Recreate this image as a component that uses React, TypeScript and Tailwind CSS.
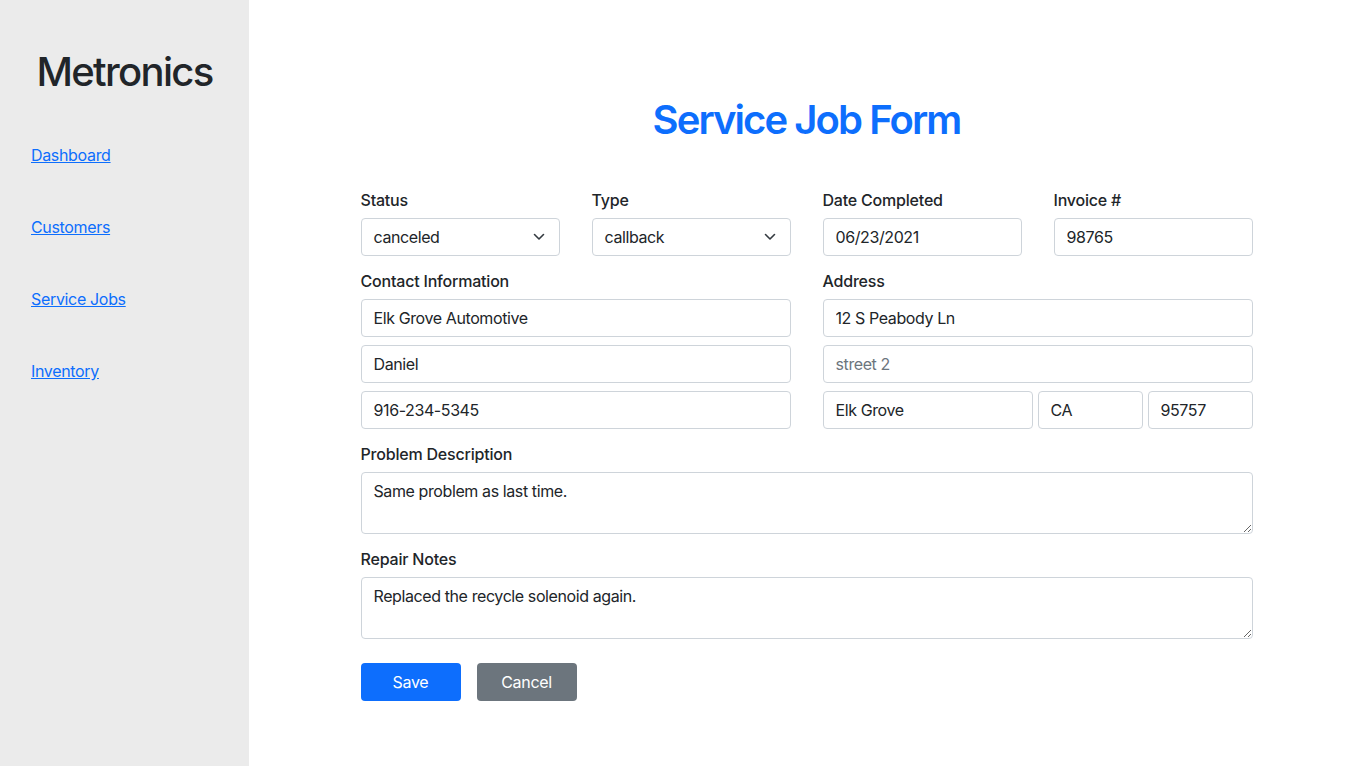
import React from "react";

const font = { fontFamily: "Inter, 'Liberation Sans', Arial, sans-serif" };

function Label({ children }: { children: React.ReactNode }) {
  return (
    <div className="mb-[6px] h-[26px] pt-[2px] text-[16px] leading-6 font-medium tracking-[-0.2px] text-[#212529]">
      {children}
    </div>
  );
}

function Field({ value, placeholder, className = "" }: { value?: string; placeholder?: string; className?: string }) {
  return (
    <input
      readOnly
      defaultValue={value}
      placeholder={placeholder}
      className={`block h-[38px] rounded-[4px] border border-[#ced4da] bg-white px-3 text-[16px] leading-6 tracking-[-0.4px] text-[#212529] placeholder:text-[#6c757d] outline-none ${className}`}
      style={font}
    />
  );
}

function Select({ value }: { value: string }) {
  return (
    <div className="flex h-[38px] w-full items-center justify-between rounded-[4px] border border-[#ced4da] bg-white pl-3 pr-[14px] text-[16px] leading-6 tracking-[-0.4px] text-[#212529]">
      <span>{value}</span>
      <svg width="12" height="8" viewBox="0 0 12 8" fill="none">
        <path d="M1.5 1.5L6 6l4.5-4.5" stroke="#343a40" strokeWidth="1.6" strokeLinecap="round" strokeLinejoin="round" />
      </svg>
    </div>
  );
}

function Area({ value }: { value: string }) {
  return (
    <textarea
      readOnly
      defaultValue={value}
      className="block h-[62px] w-full resize-y rounded-[4px] border border-[#ced4da] bg-white px-3 py-[6px] text-[16px] leading-6 tracking-[-0.4px] text-[#212529] outline-none"
      style={font}
    />
  );
}

export default function App() {
  return (
    <div className="flex min-h-[766px] w-full bg-white" style={font}>
      <aside className="w-[249px] shrink-0 bg-[#ebebeb]">
        <div className="pt-[48px] text-center text-[40px] leading-[48px] font-medium tracking-[-0.042em] text-[#212529]">
          Metronics
        </div>
        <nav className="flex flex-col pl-[31px] pt-[47px]">
          {["Dashboard", "Customers", "Service Jobs", "Inventory"].map((l) => (
            <a key={l} href="#" className="mb-[48px] h-6 self-start text-[16px] leading-6 tracking-[-0.33px] text-[#0d6efd] underline">
              {l}
            </a>
          ))}
        </nav>
      </aside>
      <main className="flex-1">
        <div className="mx-auto w-[892px] pt-[96px]">
          <h1 className="mb-[42px] text-center text-[40px] leading-[48px] font-semibold tracking-[-0.048em] text-[#0d6efd]">
            Service Job Form
          </h1>
          <div className="grid grid-cols-4 gap-x-8">
            <div>
              <Label>Status</Label>
              <Select value="canceled" />
            </div>
            <div>
              <Label>Type</Label>
              <Select value="callback" />
            </div>
            <div>
              <Label>Date Completed</Label>
              <Field value="06/23/2021" className="w-full" />
            </div>
            <div>
              <Label>Invoice #</Label>
              <Field value="98765" className="w-full" />
            </div>
          </div>
          <div className="mt-[11px] grid grid-cols-2 gap-x-8">
            <div>
              <Label>Contact Information</Label>
              <div className="flex flex-col gap-2">
                <Field value="Elk Grove Automotive" className="w-full" />
                <Field value="Daniel" className="w-full" />
                <Field value="916-234-5345" className="w-full" />
              </div>
            </div>
            <div>
              <Label>Address</Label>
              <div className="flex flex-col gap-2">
                <Field value="12 S Peabody Ln" className="w-full" />
                <Field placeholder="street 2" className="w-full" />
                <div className="flex gap-[5px]">
                  <Field value="Elk Grove" className="w-[210px]" />
                  <Field value="CA" className="w-[105px]" />
                  <Field value="95757" className="w-[105px]" />
                </div>
              </div>
            </div>
          </div>
          <div className="mt-[11px]">
            <Label>Problem Description</Label>
            <Area value="Same problem as last time." />
          </div>
          <div className="mt-[11px]">
            <Label>Repair Notes</Label>
            <Area value="Replaced the recycle solenoid again." />
          </div>
          <div className="mt-6 flex gap-4">
            <button className="h-[38px] w-[100px] rounded-[4px] bg-[#0d6efd] text-[16px] leading-6 tracking-[-0.3px] text-white">
              Save
            </button>
            <button className="h-[38px] w-[100px] rounded-[4px] bg-[#6c757d] text-[16px] leading-6 tracking-[-0.3px] text-white">
              Cancel
            </button>
          </div>
        </div>
      </main>
    </div>
  );
}
